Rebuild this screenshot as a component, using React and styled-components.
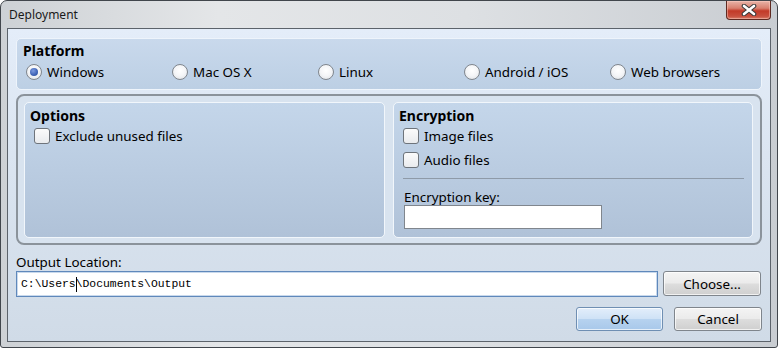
import React from "react";
import styled, { createGlobalStyle } from "styled-components";

const Global = createGlobalStyle`
  html, body { margin: 0; padding: 0; background: #ffffff; }
  body { font-family: "Noto Sans", "Open Sans", sans-serif; }
  * { box-sizing: border-box; }
`;

const UI = `"Noto Sans", "Open Sans", sans-serif`;

const Window = styled.div`
  width: 778px;
  height: 348px;
  border: 1px solid #41464c;
  border-radius: 7px 7px 3px 3px;
  background: linear-gradient(to right, #cdd1d5 0%, #e4e6e8 28%, #dde0e3 60%, #c9cdd2 100%);
  display: flex;
  flex-direction: column;
  overflow: hidden;
  font-family: ${UI};
`;

const TitleBar = styled.div`
  height: 27px;
  display: flex;
  align-items: flex-start;
  padding-left: 8px;
  flex: none;
`;

const Title = styled.div`
  line-height: 27px;
  font-size: 12px;
  color: #1a1a1a;
  flex: 1;
`;

const CloseButton = styled.div`
  width: 45px;
  height: 19px;
  margin-right: 6px;
  border: 1px solid #5e2a22;
  border-top: none;
  border-radius: 0 0 4px 4px;
  background: linear-gradient(#e8b4a8 0%, #d8806f 40%, #c23a28 55%, #c8503e 85%, #d9806c 100%);
  display: flex;
  align-items: center;
  justify-content: center;
  box-shadow: inset 0 0 0 1px rgba(255, 210, 200, 0.45);
`;

const Client = styled.div`
  flex: none;
  height: 314px;
  margin: 0 6px;
  border: 1px solid #5c636b;
  background: linear-gradient(#e4edf9 0%, #dbe5f1 40%, #d0dbe7 100%);
  padding: 9px 8px 0 8px;
  display: flex;
  flex-direction: column;
`;

const PlatformGroup = styled.div`
  height: 52px;
  border: 1px solid #eef4fb;
  border-radius: 5px;
  background: linear-gradient(#c9d9ec, #bccfe4);
  padding: 4px 0 0 6px;
`;

const Heading = styled.div`
  font-weight: bold;
  font-size: 14px;
  line-height: 16px;
  color: #000;
`;

const RadioRow = styled.div`
  margin-top: 4px;
  padding-left: 3px;
  display: grid;
  grid-template-columns: repeat(5, 146px);
  height: 18px;
  align-items: center;
`;

const Choice = styled.label`
  display: flex;
  align-items: center;
  font-size: 13.4px;
  color: #000;
  white-space: nowrap;
`;

const RadioCircle = styled.span`
  width: 16px;
  height: 16px;
  border-radius: 50%;
  border: 1px solid #80868d;
  background: radial-gradient(circle at 50% 40%, #ffffff 0%, #f4f5f7 50%, #d9dde2 100%);
  margin-right: 5px;
  display: flex;
  align-items: center;
  justify-content: center;
  flex: none;
`;

const RadioDot = styled.span`
  width: 8px;
  height: 8px;
  border-radius: 50%;
  background: radial-gradient(circle at 40% 35%, #7d9be0 0%, #3e62b5 60%, #2d4f9c 100%);
`;

const BigBox = styled.div`
  margin-top: 4px;
  height: 151px;
  border: 2px solid #8b939b;
  border-radius: 8px;
  background: #d8e3ef;
  padding: 6px 6px 5px 6px;
  display: flex;
  gap: 8px;
`;

const Panel = styled.div`
  width: ${(p) => p.$w}px;
  border: 1px solid #f1f6fb;
  border-radius: 5px;
  background: linear-gradient(#c4d6ea 0%, #b0c2d8 100%);
  padding: 5px 8px 0 5px;
  display: flex;
  flex-direction: column;
`;

const CheckRow = styled.label`
  display: flex;
  align-items: center;
  height: 24px;
  padding-left: 4px;
  font-size: 13.4px;
  color: #000;
`;

const CheckBox = styled.span`
  width: 16px;
  height: 16px;
  border: 1px solid #6e747b;
  border-radius: 3px;
  background: linear-gradient(#fbfbfb, #e9ebee);
  margin-right: 5px;
  flex: none;
`;

const Separator = styled.div`
  margin: 6px 0 0 4px;
  height: 1px;
  background: #8e9aa8;
`;

const FieldLabel = styled.div`
  font-size: 13.4px;
  line-height: 16px;
  color: #000;
  margin-top: ${(p) => p.$mt || 0}px;
  padding-left: ${(p) => p.$pl || 0}px;
`;

const KeyInput = styled.div`
  margin-left: 5px;
  width: 198px;
  height: 24px;
  border: 1px solid #80868d;
  background: #ffffff;
`;

const OutputRow = styled.div`
  margin-top: 1px;
  display: flex;
  gap: 5px;
  align-items: flex-start;
`;

const PathInput = styled.div`
  width: 642px;
  height: 26px;
  border: 1px solid #5f88bb;
  box-shadow: inset 0 0 0 1px #c9d9ec;
  background: #ffffff;
  display: flex;
  align-items: center;
  padding-left: 4px;
  font-family: "Liberation Mono", "DejaVu Sans Mono", monospace;
  font-size: 11.4px;
  color: #000;
  white-space: pre;
`;

const Caret = styled.span`
  display: inline-block;
  width: 1px;
  height: 15px;
  background: #000;
  margin-right: -1px;
  vertical-align: middle;
`;

const Button = styled.div`
  width: ${(p) => p.$w}px;
  height: ${(p) => p.$h || 24}px;
  border: 1px solid ${(p) => (p.$primary ? "#6f8fb3" : "#7f858c")};
  border-radius: 3px;
  background: ${(p) =>
    p.$primary
      ? "linear-gradient(#e3eefb 0%, #cfe2f6 48%, #b6d2ef 52%, #a8c8ea 100%)"
      : "linear-gradient(#f4f4f4 0%, #ebebeb 48%, #dddddd 52%, #cfcfcf 100%)"};
  box-shadow: inset 0 0 0 1px rgba(255, 255, 255, 0.7);
  display: flex;
  align-items: center;
  justify-content: center;
  font-size: 13.4px;
  color: #000;
`;

const ButtonRow = styled.div`
  margin-top: 10px;
  display: flex;
  justify-content: flex-end;
  gap: 11px;
`;

const CloseGlyph = () => (
  <svg width="16" height="12" viewBox="0 0 16 12">
    <path
      d="M3 2 L13 10 M13 2 L3 10"
      stroke="#3a3a3a"
      strokeWidth="4.6"
      strokeLinecap="round"
      fill="none"
    />
    <path
      d="M3 2 L13 10 M13 2 L3 10"
      stroke="#ffffff"
      strokeWidth="2.6"
      strokeLinecap="round"
      fill="none"
    />
  </svg>
);

const platforms = ["Windows", "Mac OS X", "Linux", "Android / iOS", "Web browsers"];

export default function App() {
  return (
    <>
      <Global />
      <Window>
        <TitleBar>
          <Title>Deployment</Title>
          <CloseButton>
            <CloseGlyph />
          </CloseButton>
        </TitleBar>
        <Client>
          <PlatformGroup>
            <Heading>Platform</Heading>
            <RadioRow>
              {platforms.map((p, i) => (
                <Choice key={p}>
                  <RadioCircle>{i === 0 && <RadioDot />}</RadioCircle>
                  {p}
                </Choice>
              ))}
            </RadioRow>
          </PlatformGroup>

          <BigBox>
            <Panel $w={361}>
              <Heading>Options</Heading>
              <CheckRow>
                <CheckBox />
                Exclude unused files
              </CheckRow>
            </Panel>
            <Panel $w={360}>
              <Heading>Encryption</Heading>
              <CheckRow>
                <CheckBox />
                Image files
              </CheckRow>
              <CheckRow>
                <CheckBox />
                Audio files
              </CheckRow>
              <Separator />
              <FieldLabel $mt={10} $pl={5}>Encryption key:</FieldLabel>
              <KeyInput />
            </Panel>
          </BigBox>

          <FieldLabel $mt={9}>Output Location:</FieldLabel>
          <OutputRow>
            <PathInput>
              {"C:\\Users"}
              <Caret />
              {"\\Documents\\Output"}
            </PathInput>
            <Button $w={98} $h={25}>Choose...</Button>
          </OutputRow>
          <ButtonRow>
            <Button $w={87} $primary>OK</Button>
            <Button $w={88}>Cancel</Button>
          </ButtonRow>
        </Client>
      </Window>
    </>
  );
}
